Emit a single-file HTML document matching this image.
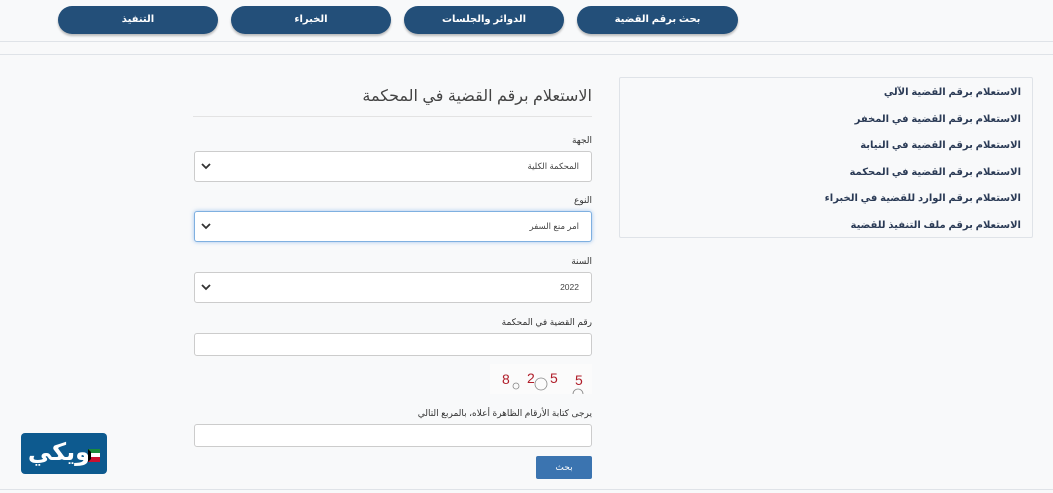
<!DOCTYPE html>
<html><head><meta charset="utf-8"><style>
*{box-sizing:border-box;margin:0;padding:0}
body{width:1053px;height:493px;background:#f8f9fa;font-family:"Liberation Sans","DejaVu Sans",sans-serif;position:relative;overflow:hidden;direction:rtl}
.a{position:absolute}
.nav{position:absolute;top:6px;width:160px;height:28px;background:#234f79;border-radius:14px;color:#fff;font-size:10px;font-weight:bold;text-align:center;line-height:28px;box-shadow:0 2px 2px rgba(0,0,0,.25)}
.hl{position:absolute;left:0;width:1053px;height:1px;background:#dfe3e8}
.lbl{position:absolute;right:461px;font-size:9px;color:#333}
.sel{position:absolute;left:194px;width:398px;height:31px;background:#fff;border:1px solid #ccc;border-radius:3px;font-size:8.5px;color:#444;line-height:29px;padding-right:12px}
.sel svg{position:absolute;left:6px;top:11px}
.inp{position:absolute;left:194px;width:398px;height:23px;background:#fff;border:1px solid #ccc;border-radius:3px}
.side{position:absolute;left:619px;top:77px;width:414px;height:161px;border:1px solid #dfe3e8;background:#f8f9fa;border-radius:2px}
.side div{position:absolute;right:11px;font-size:10px;font-weight:bold;color:#2a3a55}
</style></head><body>
<div class="hl" style="top:41px"></div>
<div class="hl" style="top:54px"></div>
<div class="nav" style="left:577px;width:161px">بحث برقم القضية</div>
<div class="nav" style="left:404px">الدوائر والجلسات</div>
<div class="nav" style="left:231px">الخبراء</div>
<div class="nav" style="left:58px">التنفيذ</div>

<div class="a" style="right:461px;top:86px;font-size:16px;color:#444">الاستعلام برقم القضية في المحكمة</div>
<div class="a" style="left:193px;top:116px;width:399px;height:1px;background:#e3e3e3"></div>

<div class="lbl" style="top:135px">الجهة</div>
<div class="sel" style="top:151px">المحكمة الكلية<svg width="10" height="7"><path d="M1 1l4 4 4-4" stroke="#333" stroke-width="1.8" fill="none"/></svg></div>
<div class="lbl" style="top:195px">النوع</div>
<div class="sel" style="top:211px;border-color:#7fb0e0;box-shadow:0 0 4px rgba(100,160,230,.6)">امر منع السفر<svg width="10" height="7"><path d="M1 1l4 4 4-4" stroke="#333" stroke-width="1.8" fill="none"/></svg></div>
<div class="lbl" style="top:256px">السنة</div>
<div class="sel" style="top:272px">2022<svg width="10" height="7"><path d="M1 1l4 4 4-4" stroke="#333" stroke-width="1.8" fill="none"/></svg></div>
<div class="lbl" style="top:317px">رقم القضية في المحكمة</div>
<div class="inp" style="top:333px"></div>

<svg class="a" style="left:490px;top:364px;direction:ltr" width="102" height="30">
<rect width="102" height="30" fill="#fbfbfb"/>
<g fill="#b01e2a" font-family="Liberation Sans" font-size="14" text-anchor="start">
<text x="12" y="20">8</text><text x="37" y="19">2</text><text x="60" y="19">5</text><text x="85" y="21">5</text></g>
<g fill="none" stroke="#888" stroke-width=".8"><circle cx="26" cy="22" r="3"/><circle cx="51" cy="20" r="6"/><path d="M83 30a5 5 0 0 1 10 0"/></g>
</svg>

<div class="lbl" style="top:408px">يرجى كتابة الأرقام الظاهرة أعلاه، بالمربع التالي</div>
<div class="inp" style="top:424px"></div>
<div class="a" style="left:536px;top:456px;width:56px;height:23px;background:#3b74b0;border-radius:2px;color:#fff;font-size:9px;text-align:center;line-height:23px">بحث</div>

<div class="hl" style="top:489px"></div>

<div class="a" style="left:21px;top:433px;width:86px;height:41px;background:#0d5a8f;border-radius:4px"></div>
<div class="a" style="left:28px;top:436px;width:62px;color:#fff;font-size:24px;font-weight:bold;text-align:center;line-height:34px">ويكي</div>
<svg class="a" style="left:88px;top:449px" width="12" height="13"><rect width="12" height="4" fill="#1a8a3a"/><rect y="4" width="12" height="4" fill="#fff"/><rect y="8" width="12" height="5" fill="#c8102e"/><path d="M0 0l3 3v7l-3 3z" fill="#000"/></svg>

<div class="side">
<div style="top:9px">الاستعلام برقم القضية الآلي</div>
<div style="top:36px">الاستعلام برقم القضية في المخفر</div>
<div style="top:62px">الاستعلام برقم القضية في النيابة</div>
<div style="top:89px">الاستعلام برقم القضية في المحكمة</div>
<div style="top:115px">الاستعلام برقم الوارد للقضية في الخبراء</div>
<div style="top:142px">الاستعلام برقم ملف التنفيذ للقضية</div>
</div>
</body></html>
